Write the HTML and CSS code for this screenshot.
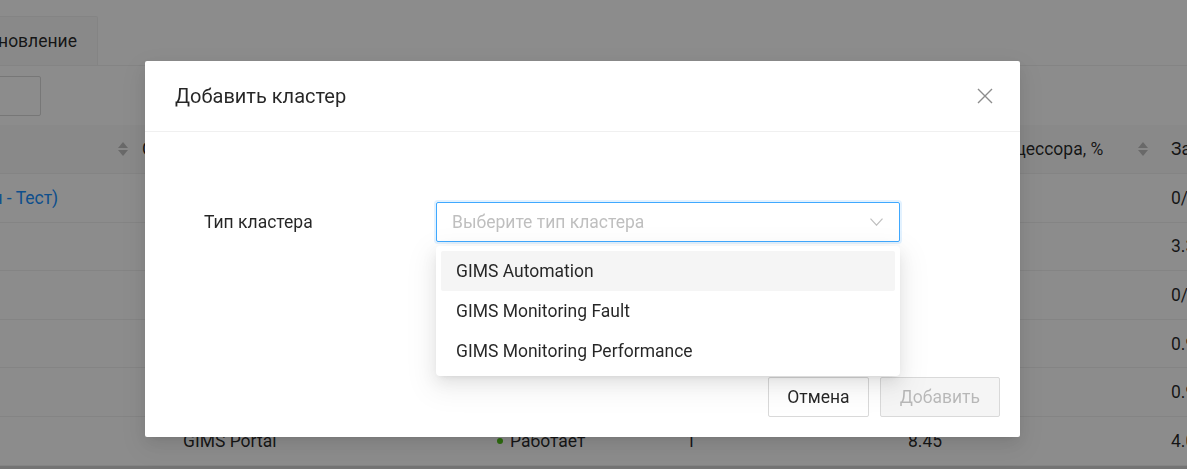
FILE: index.html
```html
<!DOCTYPE html>
<html lang="ru">
<head>
<meta charset="utf-8">
<title>Кластеры</title>
<link rel="stylesheet" href="styles.css">
</head>
<body>
<div class="page">
  <nav class="tabs">
    <div class="tab">Кластеры</div>
    <div class="tab">Обновление</div>
  </nav>
  <div class="toolbar">
    <button class="tool-btn">Добавить</button>
  </div>
  <div class="table">
    <div class="tr thead">
      <div class="th th-a">Название
        <span class="sorter"><i class="up"></i><i class="down"></i></span>
      </div>
      <div class="th">Сервис</div>
      <div class="th">Состояние</div>
      <div class="th">Узлы</div>
      <div class="th th-e">Загрузка процессора, %
        <span class="sorter"><i class="up"></i><i class="down"></i></span>
      </div>
      <div class="th th-f">Загрузка памяти, %</div>
    </div>
    <div class="tr">
      <div class="td"><a class="link">GIMS Automation (Продакшн - Тест)</a></div>
      <div class="td"></div><div class="td"></div><div class="td"></div><div class="td"></div>
      <div class="td">0/0</div>
    </div>
    <div class="tr">
      <div class="td"></div><div class="td"></div><div class="td"></div><div class="td"></div><div class="td"></div>
      <div class="td">3.32</div>
    </div>
    <div class="tr">
      <div class="td"></div><div class="td"></div><div class="td"></div><div class="td"></div><div class="td"></div>
      <div class="td">0/0</div>
    </div>
    <div class="tr">
      <div class="td"></div><div class="td"></div><div class="td"></div><div class="td"></div><div class="td"></div>
      <div class="td">0.96</div>
    </div>
    <div class="tr">
      <div class="td"></div><div class="td"></div><div class="td"></div><div class="td"></div><div class="td"></div>
      <div class="td">0.95</div>
    </div>
    <div class="tr">
      <div class="td"></div>
      <div class="td td-child">GIMS Portal</div>
      <div class="td"><span class="dot"></span>Работает</div>
      <div class="td">1</div>
      <div class="td">8.45</div>
      <div class="td">4.05</div>
    </div>
  </div>
  <div class="scrollbar"></div>
</div>

<div class="mask"></div>

<div class="modal" role="dialog">
  <div class="modal-header">
    <div class="modal-title">Добавить кластер</div>
    <button class="modal-close" aria-label="Закрыть">
      <svg width="16" height="16" viewBox="0 0 16 16"><path d="M1 1L15 15M15 1L1 15" stroke="#8c8c8c" stroke-width="1.4" fill="none"/></svg>
    </button>
  </div>
  <div class="modal-body">
    <div class="form-item">
      <label class="form-label">Тип кластера</label>
      <div class="select-wrap">
        <div class="select">
          <span class="placeholder">Выберите тип кластера</span>
          <svg class="arrow" width="13" height="8" viewBox="0 0 13 8"><path d="M0.5 0.6L6.5 7.2L12.5 0.6" stroke="#bfbfbf" stroke-width="1.2" fill="none"/></svg>
        </div>
        <div class="dropdown">
          <div class="option active">GIMS Automation</div>
          <div class="option">GIMS Monitoring Fault</div>
          <div class="option">GIMS Monitoring Performance</div>
        </div>
      </div>
    </div>
  </div>
  <div class="modal-footer">
    <button class="btn btn-cancel">Отмена</button>
    <button class="btn btn-disabled" disabled>Добавить</button>
  </div>
</div>
</body>
</html>
```

FILE: styles.css
```css
* { box-sizing: border-box; }

html, body { margin: 0; }

body {
  width: 1187px;
  height: 469px;
  overflow: hidden;
  position: relative;
  background: #fff;
  font-family: Roboto, "Noto Sans", sans-serif;
  font-size: 17.5px;
  color: rgba(0, 0, 0, 0.85);
}

/* ---- page under the dialog (scrolled to the right) ---- */
.page {
  margin-left: -239px;
  width: 1640px;
  padding-top: 16px;
}

.tabs {
  display: flex;
  gap: 2px;
  height: 50px;
  padding-left: 70px;
  border-bottom: 1px solid #f0f0f0;
}

.tab {
  height: 49px;
  padding: 0 20px;
  display: flex;
  align-items: center;
  background: #fafafa;
  border: 1px solid #f0f0f0;
  border-bottom: none;
  border-radius: 2px 2px 0 0;
}

.toolbar {
  padding: 10px 0 9px 80px;
}

.tool-btn {
  min-width: 200px;
  height: 40px;
  padding: 0 15px;
  font: inherit;
  color: inherit;
  background: #fff;
  border: 1px solid #d9d9d9;
  border-radius: 2px;
}

.tr {
  display: grid;
  grid-template-columns: 373px 355px 189px 222px 263px 300px;
  align-items: center;
  height: 48.6px;
  border-bottom: 1px solid #f0f0f0;
}

.thead {
  height: 49px;
  background: #fafafa;
}

.th, .td {
  padding: 0 8px;
  white-space: nowrap;
  overflow: hidden;
}

.th {
  display: flex;
  align-items: center;
  position: relative;
  height: 100%;
}

.th-a { justify-content: space-between; padding-right: 6px; }
.th-e { justify-content: space-between; padding-right: 15px; }

.th-f::before {
  content: "";
  position: absolute;
  left: -3px;
  top: 11px;
  bottom: 11px;
  width: 1px;
  background: rgba(0, 0, 0, 0.06);
}

.sorter {
  display: flex;
  flex-direction: column;
  gap: 2px;
}

.sorter i {
  display: block;
  width: 0;
  height: 0;
  border-left: 5px solid transparent;
  border-right: 5px solid transparent;
}

.sorter .up { border-bottom: 6px solid #bfbfbf; }
.sorter .down { border-top: 6px solid #bfbfbf; }

.link { color: #1890ff; }

.td-child { padding-left: 49px; }

.dot {
  display: inline-block;
  width: 6px;
  height: 6px;
  margin: 0 7px 2px 0;
  border-radius: 50%;
  background: #52c41a;
  vertical-align: middle;
}

.scrollbar {
  height: 8px;
  background: #d4d4d4;
}

/* ---- dialog ---- */
.mask {
  position: fixed;
  inset: 0;
  background: rgba(0, 0, 0, 0.45);
}

.modal {
  position: fixed;
  left: 145px;
  top: 61px;
  width: 875px;
  background: #fff;
  border-radius: 2px;
  box-shadow: 0 3px 6px -4px rgba(0, 0, 0, 0.12), 0 6px 16px 0 rgba(0, 0, 0, 0.08), 0 9px 28px 8px rgba(0, 0, 0, 0.05);
}

.modal-header {
  position: relative;
  height: 71px;
  padding: 0 30px;
  display: flex;
  align-items: center;
  border-bottom: 1px solid #f0f0f0;
}

.modal-title {
  font-size: 20px;
  line-height: 28px;
}

.modal-close {
  position: absolute;
  top: 0;
  right: 0;
  width: 70px;
  height: 70px;
  padding: 0;
  border: 0;
  background: none;
  display: flex;
  align-items: center;
  justify-content: center;
}

.modal-body {
  height: 225px;
  padding: 70px 120px 0 59px;
}

.form-item {
  display: flex;
  align-items: center;
}

.form-label {
  width: 232px;
}

.select-wrap {
  position: relative;
  width: 464px;
}

.select {
  height: 40px;
  padding: 0 15px;
  display: flex;
  align-items: center;
  justify-content: space-between;
  border: 1px solid #40a9ff;
  border-radius: 2px;
  box-shadow: 0 0 0 2px rgba(24, 144, 255, 0.12);
}

.placeholder { color: #bfbfbf; }

.arrow { margin-right: 1px; }

.dropdown {
  position: absolute;
  top: 44px;
  left: 0;
  right: 0;
  padding: 5px;
  background: #fff;
  border-radius: 4px;
  box-shadow: 0 3px 6px -4px rgba(0, 0, 0, 0.12), 0 6px 16px 0 rgba(0, 0, 0, 0.08), 0 9px 28px 8px rgba(0, 0, 0, 0.05);
  z-index: 2;
}

.option {
  height: 40px;
  padding: 0 15px;
  display: flex;
  align-items: center;
  border-radius: 2px;
}

.option.active { background: #f5f5f5; }

.modal-footer {
  display: flex;
  justify-content: flex-end;
  gap: 11px;
  padding: 20px;
}

.btn {
  height: 40px;
  padding: 0 19px;
  font: inherit;
  color: rgba(0, 0, 0, 0.85);
  background: #fff;
  border: 1px solid #d9d9d9;
  border-radius: 2px;
}

.btn-cancel { padding: 0 18px; }

.btn-disabled {
  color: rgba(0, 0, 0, 0.25);
  background: #f5f5f5;
}
```
